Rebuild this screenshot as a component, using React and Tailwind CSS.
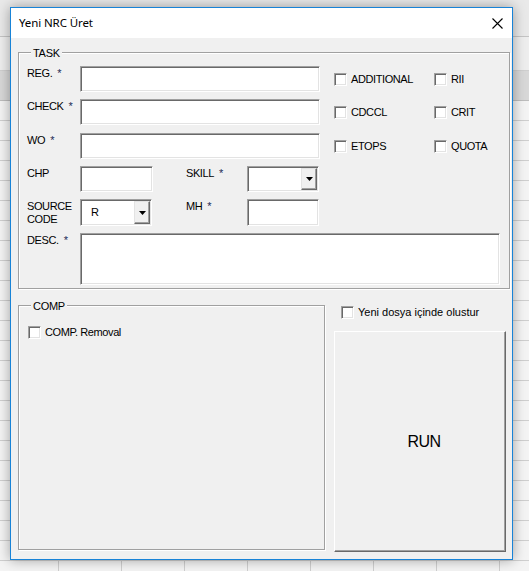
import React from 'react';

const font = "font-['Liberation_Sans',Arial,sans-serif]";
const sunken =
  'bg-white border border-t-[#a0a0a0] border-l-[#a0a0a0] border-b-white border-r-white shadow-[inset_1px_1px_0_#696969,inset_-1px_-1px_0_#e3e3e3]';

const cols = [59, 63, 63, 63, 63, 63, 63, 63, 63];

const SheetRow = () => (
  <div className="flex h-[20px] border-b border-[#cfcfcf]">
    {cols.map((w, i) => (
      <div key={i} style={{ width: w }} className="shrink-0 border-r border-[#cfcfcf]" />
    ))}
  </div>
);

const Check = ({ label, className = '', tight = true }) => (
  <div className={`flex items-center gap-[4px] ${className}`}>
    <span className={`block w-[13px] h-[13px] shrink-0 ${sunken}`} />
    <span className={`leading-[13px] ${tight ? 'tracking-[-0.4px]' : ''}`}>{label}</span>
  </div>
);

const Arrow = () => (
  <svg width="7" height="4" viewBox="0 0 7 4">
    <path d="M0 0h7L3.5 4z" fill="#000" />
  </svg>
);

const Select = ({ value, className = '' }) => (
  <div className={`flex ${sunken} ${className}`}>
    <div className="flex-1 flex items-center pl-[10px] leading-[13px]">{value}</div>
    <div className="w-[16px] my-[1px] mr-[1px] flex items-center justify-center bg-[#f0f0f0] border border-t-[#e3e3e3] border-l-[#e3e3e3] border-r-[#696969] border-b-[#696969] shadow-[inset_-1px_-1px_0_#a0a0a0]">
      <Arrow />
    </div>
  </div>
);

const Label = ({ text, star, className = 'w-[61px] pl-[8px] pt-[1px]' }) => (
  <div className={`shrink-0 leading-[13px] ${className}`}>
    <span className="tracking-[-0.4px]">{text}</span>
    {star && <span className="ml-[5px] text-[#1c2a55]">*</span>}
  </div>
);

const Group = ({ label, className = '', children }) => (
  <div className={`relative border border-[#a0a0a0] shadow-[inset_1px_1px_0_#fff,1px_1px_0_#fff] ${className}`}>
    <span className="absolute left-[12px] top-[-6px] bg-[#f0f0f0] px-[2px] leading-[13px] tracking-[-0.3px]">{label}</span>
    {children}
  </div>
);

export default function App() {
  return (
    <div className={`relative w-[529px] h-[571px] overflow-hidden bg-[#f4f4f4] text-[11px] text-black ${font}`}>
      {/* spreadsheet behind the dialog */}
      <div className="h-[37px] bg-[#e9e9e9] border-b border-[#c4c4c4]" />
      <div className="h-[34px] bg-[#eeeeee] border-b border-[#cfcfcf]" />
      <div className="h-[30px] bg-[#d8d8d8] border-b border-[#bdbdbd]" />
      {Array.from({ length: 24 }).map((_, i) => (
        <SheetRow key={i} />
      ))}

      {/* dialog window */}
      <div className="absolute left-[10px] top-[7px] w-[503px] h-[553px] flex flex-col border border-[#1883d7] bg-[#f0f0f0] shadow-[0_0_12px_rgba(0,0,0,0.35)]">
        <div className="h-[30px] shrink-0 bg-white flex items-center pl-[8px]">
          <span className="text-[11.5px] font-['Noto_Sans',sans-serif] leading-[16px] tracking-[-0.1px]">Yeni NRC Üret</span>
          <svg className="ml-auto mr-[9px]" width="11" height="11" viewBox="0 0 11 11">
            <path d="M0.5 0.5L10.5 10.5M10.5 0.5L0.5 10.5" stroke="#000" strokeWidth="1.1" />
          </svg>
        </div>

        <div className="pl-[7px] pt-[14px]">
          <Group label="TASK" className="w-[492px] h-[237px] pt-[13px]">
            <div className="flex h-[26px]">
              <Label text="REG." star />
              <div className={`w-[240px] h-full ${sunken}`} />
              <Check label="ADDITIONAL" className="ml-[14px] w-[100px]" />
              <Check label="RII" />
            </div>
            <div className="flex h-[26px] mt-[7px]">
              <Label text="CHECK" star />
              <div className={`w-[240px] h-full ${sunken}`} />
              <Check label="CDCCL" className="ml-[14px] w-[100px]" />
              <Check label="CRIT" />
            </div>
            <div className="flex h-[26px] mt-[8px]">
              <Label text="WO" star />
              <div className={`w-[240px] h-full ${sunken}`} />
              <Check label="ETOPS" className="ml-[14px] w-[100px]" />
              <Check label="QUOTA" />
            </div>
            <div className="flex h-[26px] mt-[7px]">
              <Label text="CHP" />
              <div className={`w-[73px] h-full ${sunken}`} />
              <Label text="SKILL" star className="ml-[33px] w-[61px] pt-[1px]" />
              <Select className="w-[72px] h-full" />
            </div>
            <div className="flex h-[27px] mt-[7px]">
              <Label text={<>SOURCE<br />CODE</>} />
              <Select value="R" className="w-[72px] h-full" />
              <Label text="MH" star className="ml-[34px] w-[61px] pt-[1px]" />
              <div className={`w-[72px] h-full ${sunken}`} />
            </div>
            <div className="flex h-[52px] mt-[7px]">
              <Label text="DESC." star className="w-[61px] pl-[8px] pt-[1px]" />
              <div className={`w-[420px] h-full ${sunken}`} />
            </div>
          </Group>

          <div className="flex mt-[16px]">
            <Group label="COMP" className="w-[307px] h-[245px] shrink-0 pt-[20px] pl-[9px]">
              <Check label="COMP. Removal" />
            </Group>
            <div className="ml-[9px] flex flex-col">
              <Check label="Yeni dosya içinde olustur" tight={false} className="pl-[7px] mt-[1px]" />
              <button className="mt-[12px] w-[172px] h-[221px] pl-[8px] bg-[#f0f0f0] text-[16px] tracking-[-0.6px] border border-t-white border-l-white border-r-[#696969] border-b-[#696969] shadow-[inset_-1px_-1px_0_#a0a0a0]">
                RUN
              </button>
            </div>
          </div>
        </div>
      </div>
    </div>
  );
}
